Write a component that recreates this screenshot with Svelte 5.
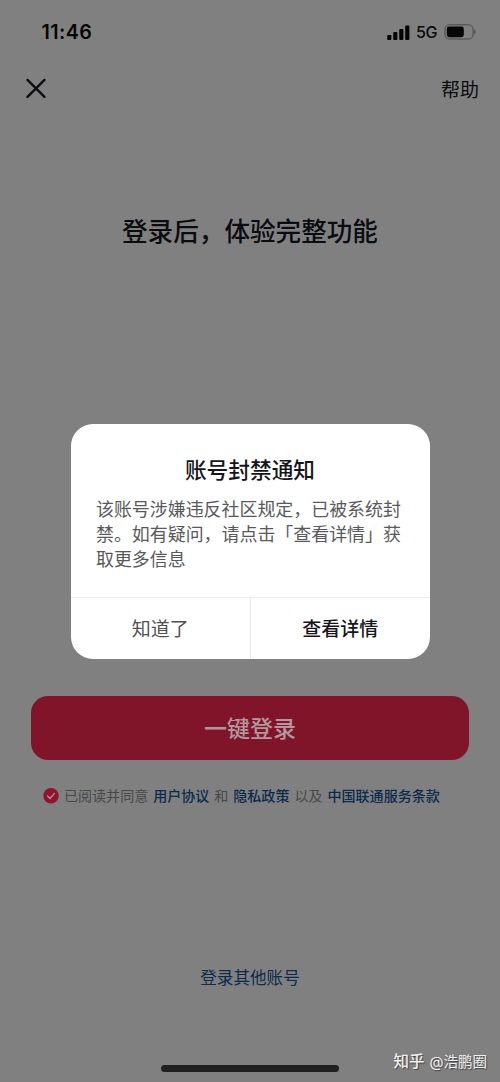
<script>
  const bars = [5, 8, 11, 14.5];
  const agreement = [
    { text: '已阅读并同意' },
    { text: '用户协议', link: true },
    { text: '和' },
    { text: '隐私政策', link: true },
    { text: '以及' },
    { text: '中国联通服务条款', link: true },
  ];
  const message = ['该账号涉嫌违反社区规定，已被系统封', '禁。如有疑问，请点击「查看详情」获', '取更多信息'];
</script>

<main class="screen">
  <header class="status">
    <span class="time">11:46</span>
    <div class="indicators">
      <svg class="signal" width="23" height="15" viewBox="0 0 23 15">
        {#each bars as h, i}
          <rect x={0.2 + i * 6} y={15 - h} width="4.2" height={h} rx="1.1" />
        {/each}
      </svg>
      <span class="network">5G</span>
      <svg width="32" height="16" viewBox="0 0 32 16">
        <rect x="1" y="0.8" width="28" height="14.2" rx="4.2" fill="none" stroke="#484848" stroke-width="1" />
        <rect x="2.8" y="2.6" width="17" height="10.6" rx="2.4" fill="#050505" />
        <path d="M30.2 5.4c1.8.7 1.8 4.3 0 5z" fill="#484848" />
      </svg>
    </div>
  </header>

  <nav class="nav">
    <button class="close" aria-label="关闭">
      <svg width="20" height="20" viewBox="0 0 20 20">
        <path d="M1.5 1.9 18.5 18.9M18.5 1.9 1.5 18.9" stroke="#0b0c10" stroke-width="2.3" stroke-linecap="round" />
      </svg>
    </button>
    <button class="help">帮助</button>
  </nav>

  <h1>登录后，体验完整功能</h1>

  <button class="login">一键登录</button>

  <div class="agreement">
    <svg width="16" height="16" viewBox="0 0 16 16">
      <circle cx="8" cy="7.7" r="7.7" fill="#8e142f" />
      <path d="M4.6 8 7.1 10.5 11.4 5.4" fill="none" stroke="#a5979b" stroke-width="1.3" stroke-linecap="round" stroke-linejoin="round" />
    </svg>
    {#each agreement as part}
      <span class:link={part.link}>{part.text}</span>
    {/each}
  </div>

  <button class="other">登录其他账号</button>

  <div class="home"></div>

  <div class="watermark"><b>知乎</b><span>@浩鹏圈</span></div>

  <section class="dialog" role="dialog" aria-label="账号封禁通知">
    <div class="content">
      <h2>账号封禁通知</h2>
      <p>{#each message as line}<span>{line}</span>{/each}</p>
    </div>
    <div class="actions">
      <button>知道了</button>
      <button class="primary">查看详情</button>
    </div>
  </section>
</main>

<style>
  .screen {
    position: relative;
    display: flex;
    flex-direction: column;
    box-sizing: border-box;
    width: 500px;
    height: 1082px;
    overflow: hidden;
    background: #808080;
    color: #0b0c10;
    font-family: Inter, 'Noto Sans CJK SC', sans-serif;
    white-space: nowrap;
  }
  button {
    margin: 0;
    padding: 0;
    border: 0;
    background: none;
    color: inherit;
    font: inherit;
  }
  svg {
    display: block;
    flex: none;
  }
  .status {
    display: flex;
    justify-content: space-between;
    align-items: center;
    height: 64px;
    padding: 0 24px 0 41.5px;
  }
  .time {
    font-size: 19.7px;
    font-weight: 600;
    letter-spacing: 0.4px;
    color: #050505;
  }
  .indicators {
    display: flex;
    align-items: center;
  }
  .signal {
    fill: #050505;
  }
  .network {
    width: 28px;
    padding-left: 6px;
    font-size: 16px;
    font-weight: 500;
    letter-spacing: -0.4px;
    color: #0b0b0b;
  }
  .nav {
    display: flex;
    justify-content: space-between;
    align-items: center;
    height: 48px;
    padding: 0 21px 0 26px;
  }
  .help {
    padding-top: 5px;
    font-size: 19px;
    line-height: 28px;
  }
  h1 {
    margin: 100px 0 0;
    font-size: 25.6px;
    line-height: 40px;
    font-weight: 500;
    text-align: center;
  }
  .login {
    height: 64px;
    margin: 444px 31px 0;
    padding-bottom: 3px;
    border-radius: 17px;
    background: #80152a;
    color: #b3979d;
    font-size: 23px;
    font-weight: 500;
  }
  .agreement {
    display: flex;
    align-items: center;
    gap: 4.9px;
    height: 24px;
    margin: 24px 0 0 43px;
    font-size: 14.07px;
    line-height: 20px;
    color: #48484b;
  }
  .agreement span {
    padding-bottom: 1px;
  }
  .link {
    color: #0c2a4c;
    font-weight: 500;
  }
  .other {
    align-self: center;
    margin-top: 158px;
    font-size: 16.6px;
    line-height: 24px;
    color: #0c2a4c;
  }
  .home {
    align-self: center;
    width: 178px;
    height: 7px;
    margin-top: 75px;
    border-radius: 4px;
    background: #202020;
  }
  .watermark {
    position: absolute;
    right: 13px;
    bottom: 9px;
    display: flex;
    gap: 5px;
    font-size: 14.5px;
    line-height: 22px;
    color: #efefef;
    text-shadow: 1px 1px 1px #444;
  }
  .watermark b {
    font-size: 15.5px;
    font-weight: 500;
  }
  .dialog {
    position: absolute;
    left: 70.5px;
    top: 424px;
    display: flex;
    flex-direction: column;
    width: 359px;
    height: 234.5px;
    border-radius: 22px;
    background: #fff;
    overflow: hidden;
  }
  .content {
    flex: 1;
    padding: 30px 0 0 25.5px;
  }
  h2 {
    margin: 0 25.5px 0 0;
    font-size: 21.7px;
    line-height: 32px;
    font-weight: 500;
    text-align: center;
    color: #15161c;
  }
  p {
    display: flex;
    flex-direction: column;
    margin: 11px 0 0;
    font-size: 17.95px;
    line-height: 25px;
    color: #59595c;
  }
  .actions {
    display: grid;
    grid-template-columns: 179.5px 1fr;
    height: 61px;
    border-top: 1px solid #ececec;
  }
  .actions button {
    padding-bottom: 2px;
    font-size: 19px;
    color: #505054;
  }
  .actions .primary {
    border-left: 1px solid #e6e6e6;
    font-weight: 500;
    color: #15161c;
  }
</style>
